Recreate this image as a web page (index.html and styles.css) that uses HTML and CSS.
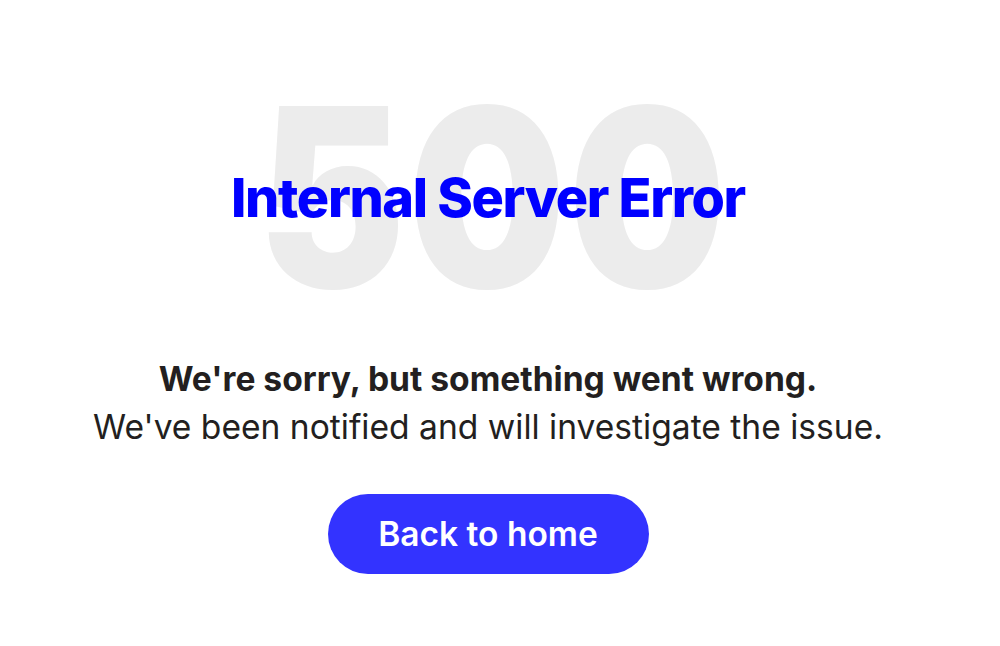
FILE: index.html
```html
<!DOCTYPE html>
<html lang="en">
<head>
  <meta charset="UTF-8" />
  <meta name="viewport" content="width=device-width, initial-scale=1.0"/>
  <title>500 - Internal Server Error</title>
  <link rel="stylesheet" href="styles.css">
</head>
<body>

  <main class="page">
    <div class="hero">
      <div class="code">500</div>
      <h1>Internal Server Error</h1>
    </div>

    <p class="message">
      <strong>We're sorry, but something went wrong.</strong><br>
      We've been notified and will investigate the issue.
    </p>

    <a href="/" class="home-btn">Back to home</a>
  </main>

</body>
</html>
```

FILE: styles.css
```css
body {
  margin: 0;
  font-family: 'Inter', 'Noto Sans', sans-serif;
  background: #fff;
  color: #231f20;
}
.page {
  display: flex;
  flex-direction: column;
  align-items: center;
  padding: 72px 24px 0 0;
  text-align: center;
}
.hero {
  display: grid;
  place-items: center;
}
.code, .hero h1 {
  grid-area: 1 / 1;
}
.code {
  padding-left: 12px;
  font-size: 250px;
  font-weight: 900;
  line-height: 1;
  letter-spacing: 0.01em;
  color: #ececec;
  transform: scaleX(0.89);
}
.hero h1 {
  position: relative;
  z-index: 1;
  margin: 0;
  font-size: 54px;
  font-weight: 800;
  letter-spacing: -0.025em;
  color: #0000ff;
}
.message {
  margin: 33px 0 0;
  font-size: 33.6px;
  line-height: 48px;
}
.message strong {
  font-weight: 700;
}
.home-btn {
  display: block;
  margin-top: 43px;
  width: 321px;
  height: 80px;
  line-height: 80px;
  border-radius: 40px;
  background: #3333ff;
  color: #fff;
  font-size: 33.5px;
  font-weight: 600;
  text-decoration: none;
}
```
